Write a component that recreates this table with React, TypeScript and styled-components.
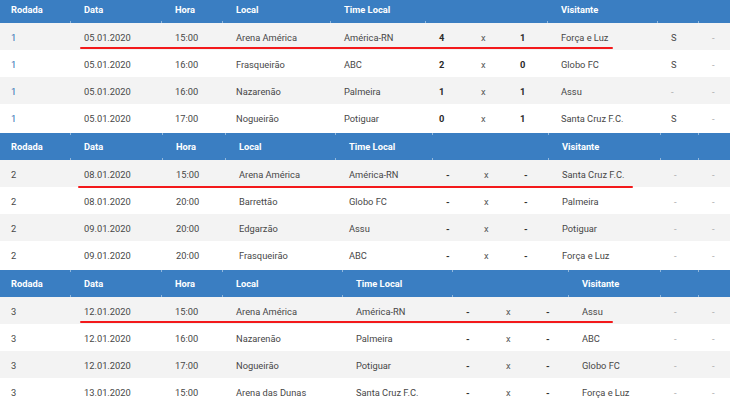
import React from "react";
import styled, { createGlobalStyle, css } from "styled-components";

const GlobalStyle = createGlobalStyle`
  html, body { margin: 0; padding: 0; background: #ffffff; }
  body {
    font-family: Roboto, "Liberation Sans", Arial, sans-serif;
    width: 730px;
    height: 400px;
    overflow: hidden;
  }
`;

const Page = styled.div`
  display: flex;
  flex-direction: column;
  gap: 2px;
  margin-top: -4px;
`;

const Table = styled.section`
  position: relative;
  display: flex;
  flex-direction: column;
`;

const HeaderRow = styled.div<{ $cols: string }>`
  display: grid;
  grid-template-columns: ${(p) => p.$cols};
  height: 27px;
  background: #3a7ec2;
  color: #ffffff;
  font-weight: 700;
  font-size: 9.3px;
`;

const HeadCell = styled.div<{ $span?: number }>`
  position: relative;
  display: flex;
  align-items: center;
  padding-left: 14px;
  white-space: nowrap;
  ${(p) => p.$span && css`grid-column: span ${p.$span};`}
  &:first-child { padding-left: 11px; }
  &:not(:first-child)::before,
  &:not(:first-child)::after {
    content: "";
    position: absolute;
    left: 0;
    width: 1px;
    height: 2px;
    background: rgba(255, 255, 255, 0.45);
  }
  &::before { top: 0; }
  &::after { bottom: 0; }
`;

const Row = styled.div<{ $cols: string; $shade: boolean }>`
  display: grid;
  grid-template-columns: ${(p) => p.$cols};
  height: 27px;
  background: ${(p) => (p.$shade ? "#f3f3f3" : "#ffffff")};
  font-size: 9.3px;
  color: #474747;
`;

type Tone = "text" | "link" | "score" | "sep" | "faint";

const toneStyles: Record<Tone, ReturnType<typeof css>> = {
  text: css`color: #474747;`,
  link: css`color: #2d6db3;`,
  score: css`color: #2a2a2a; font-weight: 700;`,
  sep: css`color: #5a5a5a;`,
  faint: css`color: #a8a8a8;`,
};

const Cell = styled.div<{ $tone?: Tone }>`
  display: flex;
  align-items: center;
  padding-left: 14px;
  padding-top: 2px;
  white-space: nowrap;
  overflow: hidden;
  &:first-child { padding-left: 11px; }
  ${(p) => toneStyles[p.$tone || "text"]}
`;

const Underline = styled.div<{ $top: number; $left: number; $width: number }>`
  position: absolute;
  top: ${(p) => p.$top}px;
  left: ${(p) => p.$left}px;
  width: ${(p) => p.$width}px;
  height: 2px;
  background: #f3191b;
  border-radius: 1px;
`;

type Match = [string, string, string, string, string, string, string, string, string, string, string];

interface Round {
  cols: string;
  rodadaTone: Tone;
  line: { top: number; left: number; width: number };
  matches: Match[];
}

const rounds: Round[] = [
  {
    cols: "70px 91px 61px 108px 95px 42px 39px 41px 110px 41px 32px",
    rodadaTone: "link",
    line: { top: 51, left: 80, width: 533 },
    matches: [
      ["1", "05.01.2020", "15:00", "Arena América", "América-RN", "4", "x", "1", "Força e Luz", "S", "-"],
      ["1", "05.01.2020", "16:00", "Frasqueirão", "ABC", "2", "x", "0", "Globo FC", "S", "-"],
      ["1", "05.01.2020", "16:00", "Nazarenão", "Palmeira", "1", "x", "1", "Assu", "-", "-"],
      ["1", "05.01.2020", "17:00", "Nogueirão", "Potiguar", "0", "x", "1", "Santa Cruz F.C.", "S", "-"],
    ],
  },
  {
    cols: "70px 92px 63px 110px 97px 38px 40px 38px 112px 38px 32px",
    rodadaTone: "text",
    line: { top: 53, left: 78, width: 555 },
    matches: [
      ["2", "08.01.2020", "15:00", "Arena América", "América-RN", "-", "x", "-", "Santa Cruz F.C.", "-", "-"],
      ["2", "08.01.2020", "20:00", "Barrettão", "Globo FC", "-", "x", "-", "Palmeira", "-", "-"],
      ["2", "09.01.2020", "20:00", "Edgarzão", "Assu", "-", "x", "-", "Potiguar", "-", "-"],
      ["2", "09.01.2020", "20:00", "Frasqueirão", "ABC", "-", "x", "-", "Força e Luz", "-", "-"],
    ],
  },
  {
    cols: "70px 91px 61px 120px 110px 40px 40px 36px 92px 38px 32px",
    rodadaTone: "text",
    line: { top: 51, left: 80, width: 533 },
    matches: [
      ["3", "12.01.2020", "15:00", "Arena América", "América-RN", "-", "x", "-", "Assu", "-", "-"],
      ["3", "12.01.2020", "16:00", "Nazarenão", "Palmeira", "-", "x", "-", "ABC", "-", "-"],
      ["3", "12.01.2020", "17:00", "Nogueirão", "Potiguar", "-", "x", "-", "Globo FC", "-", "-"],
      ["3", "13.01.2020", "15:00", "Arena das Dunas", "Santa Cruz F.C.", "-", "x", "-", "Força e Luz", "-", "-"],
    ],
  },
];

const cellTone = (index: number, value: string, round: Round): Tone => {
  if (index === 0) return round.rodadaTone;
  if (index === 5 || index === 7) return "score";
  if (index === 6) return "sep";
  if (index >= 9) return value === "-" ? "faint" : "text";
  return "text";
};

export default function App() {
  return (
    <>
      <GlobalStyle />
      <Page>
        {rounds.map((round, r) => (
          <Table key={r}>
            <HeaderRow $cols={round.cols}>
              <HeadCell>Rodada</HeadCell>
              <HeadCell>Data</HeadCell>
              <HeadCell>Hora</HeadCell>
              <HeadCell>Local</HeadCell>
              <HeadCell>Time Local</HeadCell>
              <HeadCell $span={3} />
              <HeadCell>Visitante</HeadCell>
              <HeadCell />
              <HeadCell />
            </HeaderRow>
            {round.matches.map((m, i) => (
              <Row key={i} $cols={round.cols} $shade={i % 2 === 0}>
                {m.map((v, c) => (
                  <Cell key={c} $tone={cellTone(c, v, round)}>
                    {v}
                  </Cell>
                ))}
              </Row>
            ))}
            <Underline $top={round.line.top} $left={round.line.left} $width={round.line.width} />
          </Table>
        ))}
      </Page>
    </>
  );
}
